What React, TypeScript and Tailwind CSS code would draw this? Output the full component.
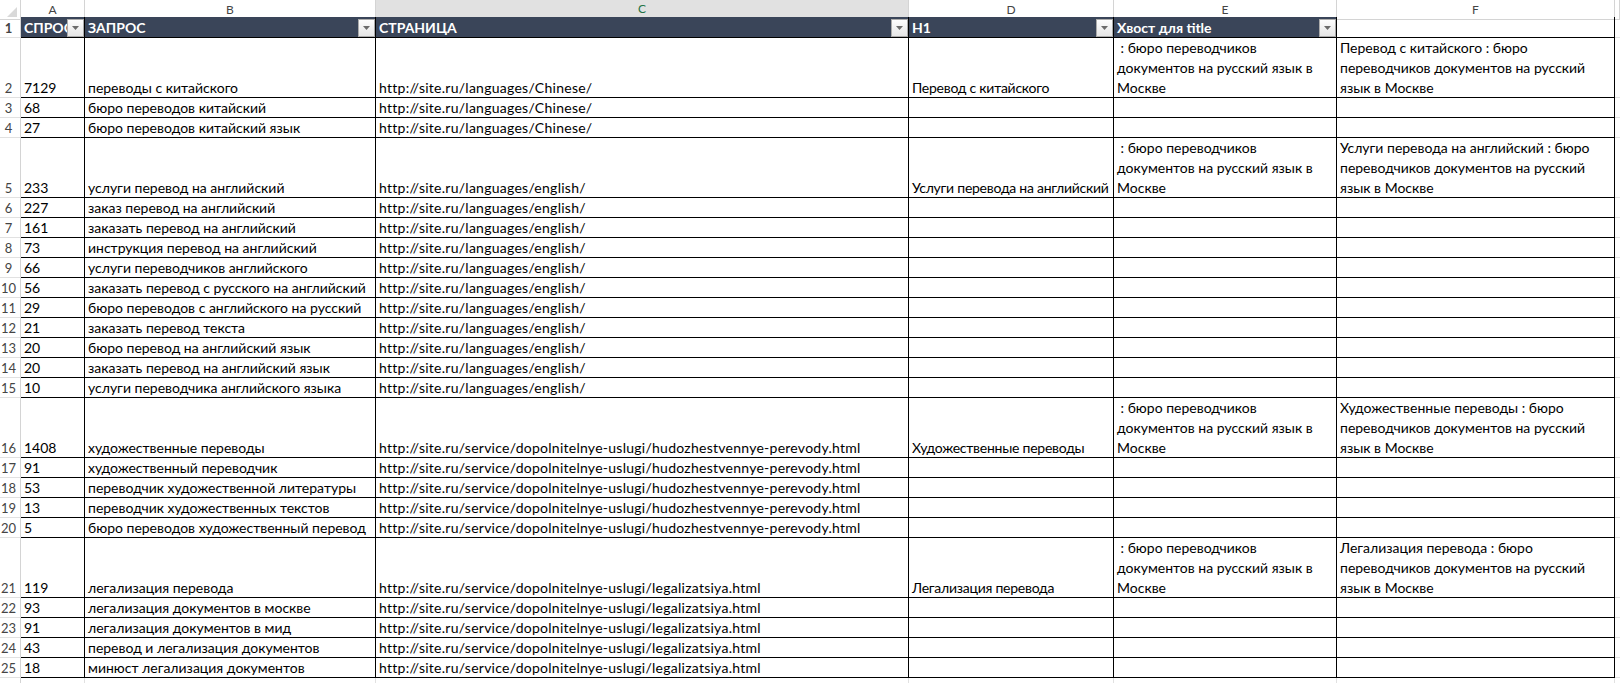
import React from 'react';

const GRID = 'grid grid-cols-[21px_64px_291px_533px_205px_223px_278px_1fr]';

type Row = {
  n: number;
  a: string;
  b: string;
  c: string;
  d?: string;
};

const CN = 'http://site.ru/languages/Chinese/';
const EN = 'http://site.ru/languages/english/';
const HUD = 'http://site.ru/service/dopolnitelnye-uslugi/hudozhestvennye-perevody.html';
const LEG = 'http://site.ru/service/dopolnitelnye-uslugi/legalizatsiya.html';

const rows: Row[] = [
  { n: 2, a: '7129', b: 'переводы с китайского', c: CN, d: 'Перевод с китайского' },
  { n: 3, a: '68', b: 'бюро переводов китайский', c: CN },
  { n: 4, a: '27', b: 'бюро переводов китайский язык', c: CN },
  { n: 5, a: '233', b: 'услуги перевод на английский', c: EN, d: 'Услуги перевода на английский' },
  { n: 6, a: '227', b: 'заказ перевод на английский', c: EN },
  { n: 7, a: '161', b: 'заказать перевод на английский', c: EN },
  { n: 8, a: '73', b: 'инструкция перевод на английский', c: EN },
  { n: 9, a: '66', b: 'услуги переводчиков английского', c: EN },
  { n: 10, a: '56', b: 'заказать перевод с русского на английский', c: EN },
  { n: 11, a: '29', b: 'бюро переводов с английского на русский', c: EN },
  { n: 12, a: '21', b: 'заказать перевод текста', c: EN },
  { n: 13, a: '20', b: 'бюро перевод на английский язык', c: EN },
  { n: 14, a: '20', b: 'заказать перевод на английский язык', c: EN },
  { n: 15, a: '10', b: 'услуги переводчика английского языка', c: EN },
  { n: 16, a: '1408', b: 'художественные переводы', c: HUD, d: 'Художественные переводы' },
  { n: 17, a: '91', b: 'художественный переводчик', c: HUD },
  { n: 18, a: '53', b: 'переводчик художественной литературы', c: HUD },
  { n: 19, a: '13', b: 'переводчик художественных текстов', c: HUD },
  { n: 20, a: '5', b: 'бюро переводов художественный перевод', c: HUD },
  { n: 21, a: '119', b: 'легализация перевода', c: LEG, d: 'Легализация перевода' },
  { n: 22, a: '93', b: 'легализация документов в москве', c: LEG },
  { n: 23, a: '91', b: 'легализация документов в мид', c: LEG },
  { n: 24, a: '43', b: 'перевод и легализация документов', c: LEG },
  { n: 25, a: '18', b: 'минюст легализация документов', c: LEG },
];

const TAIL = [' : бюро переводчиков', 'документов на русский язык в', 'Москве'];

function Filter() {
  return (
    <div className="absolute right-0 bottom-0 flex h-[18px] w-[17px] items-center justify-center border border-[#ababab] bg-linear-to-b from-[#fdfdfd] to-[#e6e6e6]">
      <svg width="7" height="4" viewBox="0 0 7 4">
        <path d="M0 0h7L3.5 4z" fill="#6b6b6b" />
      </svg>
    </div>
  );
}

function Cell({ text, className = '' }: { text?: string; className?: string }) {
  return (
    <div className={`flex items-end overflow-hidden whitespace-nowrap border-r border-b border-black px-[3px] leading-[18px] ${className}`}>
      {text}
    </div>
  );
}

function Wrapped({ lines }: { lines: string[] }) {
  return (
    <div className="flex flex-col justify-end overflow-hidden whitespace-pre border-r border-b border-black px-[3px]">
      <div className="-mb-px leading-[20px]">
        {lines.map((l, i) => (
          <div key={i}>{l}</div>
        ))}
      </div>
    </div>
  );
}

function RowNum({ n }: { n: number | string }) {
  return (
    <div className="flex items-end justify-center border-r border-b border-[#e1e1e1] border-r-[#d4d4d4] pr-[3px] text-[13px] leading-[17px] text-[#444]">
      {n}
    </div>
  );
}

export default function App() {
  return (
    <div className="h-[683px] w-[1620px] overflow-hidden bg-white font-['Lato','Liberation_Sans',sans-serif] text-[14px] text-black">
      {/* column letters */}
      <div className={`${GRID} h-[17px] text-[12px] text-[#444]`}>
        <div className="relative border-r border-b border-[#d4d4d4]">
          <svg className="absolute right-[3px] bottom-[2px]" width="10" height="10" viewBox="0 0 10 10">
            <path d="M10 0V10H0z" fill="#d9d9d9" />
          </svg>
        </div>
        {['A', 'B'].map((l) => (
          <div key={l} className="flex items-center justify-center border-r border-b border-[#d4d4d4]">
            {l}
          </div>
        ))}
        <div className="flex items-center justify-center border-r border-r-[#d4d4d4] border-b-2 border-b-[#217346] bg-[#e1e1e1] text-[#217346]">
          C
        </div>
        {['D', 'E', 'F', ''].map((l) => (
          <div key={l} className="flex items-center justify-center border-r border-b border-[#d4d4d4]">
            {l}
          </div>
        ))}
      </div>

      {/* table header */}
      <div className={`${GRID} h-[21px] font-bold text-white`}>
        <RowNum n={1} />
        {['СПРОС', 'ЗАПРОС', 'СТРАНИЦА', 'H1', 'Хвост для title'].map((h) => (
          <div key={h} className="relative flex items-end overflow-hidden whitespace-nowrap border-r border-b border-black bg-[#3a4559] px-[3px] leading-[18px]">
            {h}
            <Filter />
          </div>
        ))}
        <div className="border-r border-b border-black" />
        <div className="border-b border-[#e1e1e1]" />
      </div>

      {rows.map((r) => (
        <div key={r.n} className={`${GRID} ${r.d ? 'h-[60px]' : 'h-[20px]'}`}>
          <RowNum n={r.n} />
          <Cell text={r.a} />
          <Cell text={r.b} />
          <Cell text={r.c} className="tracking-[0.26px]" />
          <Cell text={r.d} className="tracking-[-0.25px]" />
          {r.d ? <Wrapped lines={TAIL} /> : <Cell />}
          {r.d ? (
            <Wrapped lines={[`${r.d} : бюро`, 'переводчиков документов на русский', 'язык в Москве']} />
          ) : (
            <Cell />
          )}
          <div className="border-b border-[#e1e1e1]" />
        </div>
      ))}

      {/* next empty row */}
      <div className={`${GRID} h-[20px]`}>
        <div className="border-r border-[#d4d4d4]" />
        <div className="border-r border-[#e1e1e1]" />
        <div className="border-r border-[#e1e1e1]" />
        <div className="border-r border-[#e1e1e1]" />
        <div className="border-r border-[#e1e1e1]" />
        <div className="border-r border-[#e1e1e1]" />
        <div className="border-r border-[#e1e1e1]" />
        <div />
      </div>
    </div>
  );
}
